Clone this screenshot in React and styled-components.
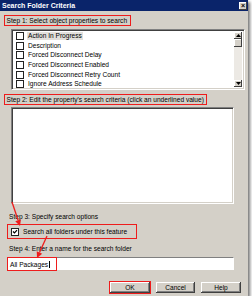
import React from "react";
import styled, { createGlobalStyle } from "styled-components";

const Global = createGlobalStyle`
  html, body { margin: 0; padding: 0; background: #ffffff; }
  body { font-family: "Liberation Sans", Arial, sans-serif; }
`;

const Dialog = styled.div`
  position: relative;
  width: 248px;
  height: 296px;
  background: #d4d0c8;
  box-shadow: 2px 2px 3px rgba(0,0,0,0.55);
  display: flex;
  flex-direction: column;
  font-size: 6.6px;
  color: #000;
  overflow: visible;
`;

const TitleBar = styled.div`
  height: 11px;
  background: #0a246a;
  display: flex;
  align-items: center;
  justify-content: space-between;
  padding: 0 1px 0 2px;
`;

const Title = styled.span`
  color: #fff;
  font-weight: bold;
  font-size: 7px;
`;

const CloseBtn = styled.div`
  width: 8px;
  height: 8px;
  background: #d4d0c8;
  box-shadow: inset -1px -1px #404040, inset 1px 1px #fff;
  display: flex;
  align-items: center;
  justify-content: center;
  font-size: 7px;
  font-weight: bold;
  line-height: 1;
`;

const Body = styled.div`
  flex: 1;
  display: flex;
  flex-direction: column;
  padding: 0 3px 0 4px;
`;

const Highlight = styled.div`
  align-self: flex-start;
  margin-top: ${(p) => p.$mt}px;
  margin-left: ${(p) => p.$ml || 0}px;
  width: ${(p) => (p.$w ? p.$w + "px" : "auto")};
  height: ${(p) => p.$h}px;
  border: 1.5px solid #ee1c1c;
  box-sizing: border-box;
  display: flex;
  align-items: center;
  padding-left: ${(p) => p.$pl || 1.5}px;
  white-space: nowrap;
`;

const Label = styled.div`
  margin-top: ${(p) => p.$mt}px;
  margin-left: 5px;
  height: 10px;
  line-height: 10px;
  white-space: nowrap;
`;

const Sunken = styled.div`
  margin-top: ${(p) => p.$mt}px;
  margin-left: 7px;
  margin-right: ${(p) => p.$mr || 0}px;
  height: ${(p) => p.$h}px;
  background: #fff;
  box-sizing: border-box;
  border-top: 1px solid #808080;
  border-left: 1px solid #808080;
  border-right: 1px solid #fff;
  border-bottom: 1px solid #fff;
  box-shadow: inset 1px 1px #404040, inset -1px -1px #d4d0c8;
  position: relative;
  display: flex;
`;

const ListItems = styled.div`
  flex: 1;
  padding: 1px 0 0 4px;
  display: flex;
  flex-direction: column;
`;

const Row = styled.div`
  height: 10.2px;
  display: flex;
  align-items: center;
  gap: 3px;
  white-space: nowrap;
`;

const Box = styled.span`
  width: 6px;
  height: 6px;
  border: 1px solid #222;
  background: #fff;
  flex: none;
  position: relative;
`;

const RowText = styled.span`
  padding: 0 1px;
  background: ${(p) => (p.$sel ? "#e2e0dc" : "transparent")};
  line-height: 8px;
`;

const ScrollBar = styled.div`
  width: 8px;
  margin: 2px 2px 2px 0;
  background: #ece9e4;
  display: flex;
  flex-direction: column;
  justify-content: space-between;
  position: relative;
`;

const ScrollBtn = styled.div`
  width: 8px;
  height: 7px;
  background: #d4d0c8;
  box-sizing: border-box;
  box-shadow: inset -1px -1px #404040, inset 1px 1px #fff;
  display: flex;
  align-items: center;
  justify-content: center;
`;

const Thumb = styled(ScrollBtn)`
  position: absolute;
  top: 7px;
  left: 0;
  height: 8px;
`;

const CheckRow = styled.div`
  display: flex;
  align-items: center;
  gap: 4px;
`;

const InputRow = styled.div`
  margin-top: 3px;
  margin-left: 3px;
  margin-right: 11px;
  height: 13px;
  background: #fff;
  box-sizing: border-box;
  border-top: 1px solid #808080;
  border-left: 1px solid #808080;
  border-right: 1px solid #fff;
  border-bottom: 1px solid #fff;
  position: relative;
  display: flex;
`;

const InputMark = styled.div`
  width: 50px;
  margin: -1px 0 -2px -1px;
  border: 1.5px solid #ee1c1c;
  box-sizing: border-box;
  display: flex;
  align-items: center;
  padding-left: 2px;
  white-space: nowrap;
`;

const Caret = styled.span`
  display: inline-block;
  width: 0.6px;
  height: 7px;
  background: #000;
  margin-left: 0.5px;
`;

const Buttons = styled.div`
  margin-top: 12px;
  margin-right: 4px;
  display: flex;
  justify-content: flex-end;
  gap: 6px;
`;

const Button = styled.div`
  width: ${(p) => p.$w}px;
  height: 11px;
  box-sizing: border-box;
  background: #d4d0c8;
  box-shadow: inset -1px -1px #404040, inset 1px 1px #fff, inset -2px -2px #808080;
  display: flex;
  align-items: center;
  justify-content: center;
  outline: ${(p) => (p.$mark ? "1.5px solid #ee1c1c" : "none")};
  outline-offset: 0.5px;
`;

const Overlay = styled.svg`
  position: absolute;
  left: 0;
  top: 0;
  pointer-events: none;
`;

const items = [
  "Action In Progress",
  "Description",
  "Forced Disconnect Delay",
  "Forced Disconnect Enabled",
  "Forced Disconnect Retry Count",
  "Ignore Address Schedule",
];

function Arrow({ x1, y1, x2, y2 }) {
  const ang = Math.atan2(y2 - y1, x2 - x1);
  const len = 6;
  const w = 3;
  const bx = x2 - len * Math.cos(ang);
  const by = y2 - len * Math.sin(ang);
  const px = -Math.sin(ang) * w;
  const py = Math.cos(ang) * w;
  return (
    <g>
      <line x1={x1} y1={y1} x2={bx} y2={by} stroke="#ee1c1c" strokeWidth="1.3" />
      <polygon points={`${x2},${y2} ${bx + px},${by + py} ${bx - px},${by - py}`} fill="#ee1c1c" />
    </g>
  );
}

export default function App() {
  return (
    <>
      <Global />
      <Dialog>
        <TitleBar>
          <Title>Search Folder Criteria</Title>
          <CloseBtn>×</CloseBtn>
        </TitleBar>
        <Body>
          <Highlight $mt={4} $h={11} $w={127}>Step 1: Select object properties to search</Highlight>
          <Sunken $mt={3} $h={61}>
            <ListItems>
              {items.map((t, i) => (
                <Row key={t}>
                  <Box />
                  <RowText $sel={i === 0}>{t}</RowText>
                </Row>
              ))}
            </ListItems>
            <ScrollBar>
              <ScrollBtn>
                <svg width="5" height="3" viewBox="0 0 5 3"><polygon points="2.5,0 5,3 0,3" fill="#000" /></svg>
              </ScrollBtn>
              <Thumb />
              <ScrollBtn>
                <svg width="5" height="3" viewBox="0 0 5 3"><polygon points="0,0 5,0 2.5,3" fill="#000" /></svg>
              </ScrollBtn>
            </ScrollBar>
          </Sunken>
          <Highlight $mt={4} $h={11} $w={203}>Step 2: Edit the property's search criteria (click an underlined value)</Highlight>
          <Sunken $mt={2} $h={97} $mr={11} />
          <Label $mt={8}>Step 3: Specify search options</Label>
          <Highlight $mt={2} $ml={3} $h={15} $w={130} $pl={3}>
            <CheckRow>
              <Box>
                <svg width="6" height="6" viewBox="0 0 6 6" style={{ position: "absolute", left: 0, top: 0 }}>
                  <polyline points="1,2.5 2.5,4 5,1.2" fill="none" stroke="#000" strokeWidth="1.2" />
                </svg>
              </Box>
              <span>Search all folders under this feature</span>
            </CheckRow>
          </Highlight>
          <Label $mt={5}>Step 4: Enter a name for the search folder</Label>
          <InputRow>
            <InputMark>All Packages<Caret /></InputMark>
          </InputRow>
          <Buttons>
            <Button $w={40} $mark>OK</Button>
            <Button $w={39}>Cancel</Button>
            <Button $w={40}>Help</Button>
          </Buttons>
        </Body>
        <Overlay width="252" height="301" viewBox="0 0 252 301">
          <Arrow x1={12} y1={202} x2={20} y2={226} />
          <Arrow x1={47} y1={236} x2={37} y2={258} />
        </Overlay>
      </Dialog>
    </>
  );
}
